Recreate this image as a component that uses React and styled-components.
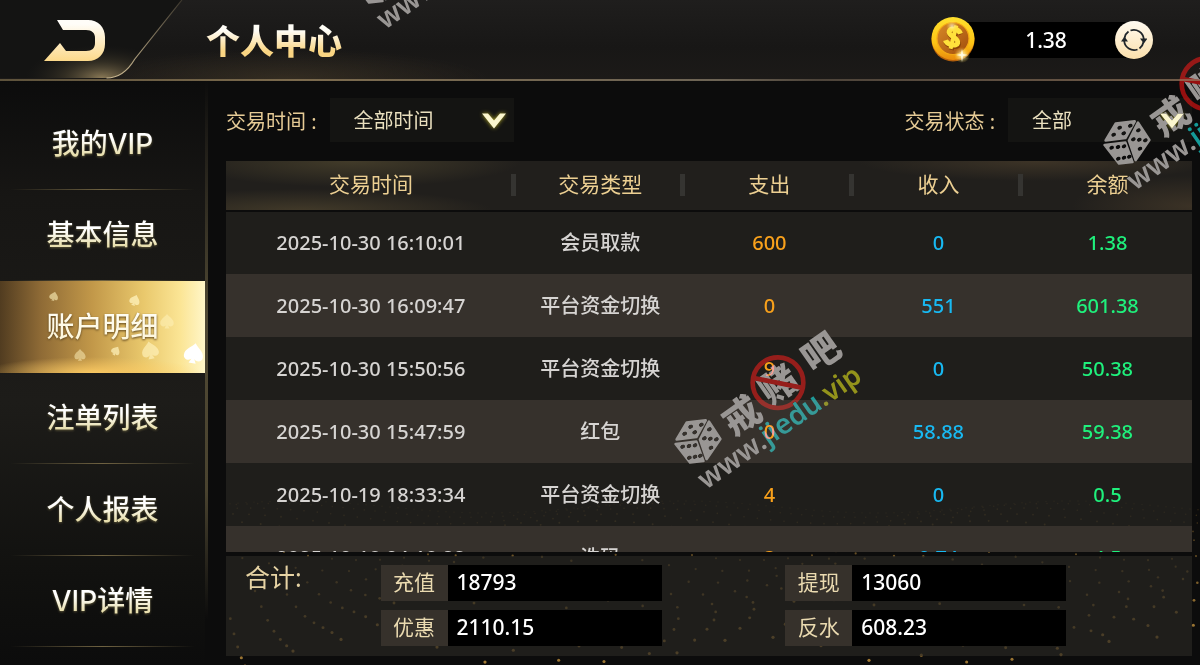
import React, { useState } from "react";
import styled, { createGlobalStyle } from "styled-components";

const tabs = ["我的VIP", "基本信息", "账户明细", "注单列表", "个人报表", "VIP详情"];

const columns = ["交易时间", "交易类型", "支出", "收入", "余额"];

const records = [
  ["2025-10-30 16:10:01", "会员取款", "600", "0", "1.38"],
  ["2025-10-30 16:09:47", "平台资金切换", "0", "551", "601.38"],
  ["2025-10-30 15:50:56", "平台资金切换", "9", "0", "50.38"],
  ["2025-10-30 15:47:59", "红包", "0", "58.88", "59.38"],
  ["2025-10-19 18:33:34", "平台资金切换", "4", "0", "0.5"],
  ["2025-10-18 04:18:22", "洗码", "3", "0.74", "4.5"],
];

const totals = [
  ["充值", "18793"],
  ["提现", "13060"],
  ["优惠", "2110.15"],
  ["反水", "608.23"],
];

const stamps = [
  { x: 319, y: -150 },
  { x: 640, y: 310 },
  { x: 1069, y: 11 },
];

// rows of dots that spread out towards the bottom, like a floor in perspective
const dots = [];
for (let row = 0; row < 16; row++) {
  const depth = row / 15;
  const gap = 8 + depth * 40;
  for (let x = 230 + ((row * 17) % gap); x < 1200; x += gap) {
    const wave = Math.sin(x / 62 + row / 3) * (6 + depth * 14);
    dots.push({
      x,
      y: 22 + depth ** 1.4 * 150 + wave,
      r: 0.7 + depth * 0.9,
      o: 0.2 + depth * 0.6,
    });
  }
}

const BackIcon = () => (
  <svg width="62" height="42" viewBox="0 0 62 42" aria-hidden="true">
    <defs>
      <linearGradient id="back" x1="0" y1="0" x2="0" y2="1">
        <stop offset="0.1" stopColor="#fffdf8" />
        <stop offset="1" stopColor="#fcd98a" />
      </linearGradient>
    </defs>
    <path
      fill="url(#back)"
      d="M13 0H44C54 0 61 7 61 17V24C61 34 54 41 44 41H0L16 23L22 31H42C48 31 51 28 51 23V18C51 13 48 10 42 10H19Z"
    />
  </svg>
);

const BackPlate = () => (
  <Plate viewBox="0 0 205 80" preserveAspectRatio="none" aria-hidden="true">
    <defs>
      <radialGradient id="plateGlow" cx="0.56" cy="1" r="0.42">
        <stop offset="0" stopColor="#a08c63" stopOpacity="0.85" />
        <stop offset="0.5" stopColor="#5c5139" stopOpacity="0.4" />
        <stop offset="1" stopColor="#2a2620" stopOpacity="0" />
      </radialGradient>
      <linearGradient id="plateEdge" x1="0" y1="0" x2="0" y2="1">
        <stop offset="0" stopColor="#3c372d" />
        <stop offset="1" stopColor="#cbb992" />
      </linearGradient>
    </defs>
    <path fill="#141413" d="M0 0H181L134 60Q123 79 106 79H0Z" />
    <path fill="url(#plateGlow)" d="M0 0H181L134 60Q123 79 106 79H0Z" />
    <path fill="none" stroke="url(#plateEdge)" strokeWidth="1.2" d="M181 0L134 60Q123 79 106 79" />
  </Plate>
);

const Coin = () => (
  <CoinSvg width="46" height="48" viewBox="0 0 46 48" aria-hidden="true">
    <defs>
      <linearGradient id="rim" x1="0" y1="0" x2="0" y2="1">
        <stop offset="0" stopColor="#ffe02e" />
        <stop offset="0.6" stopColor="#fdc415" />
        <stop offset="1" stopColor="#e98a0c" />
      </linearGradient>
      <linearGradient id="face" x1="0" y1="0" x2="1" y2="1">
        <stop offset="0" stopColor="#d98a28" />
        <stop offset="1" stopColor="#a04c0b" />
      </linearGradient>
      <radialGradient id="spark">
        <stop offset="0" stopColor="#fff" />
        <stop offset="0.35" stopColor="#fff3ae" stopOpacity="0.8" />
        <stop offset="1" stopColor="#ffd23c" stopOpacity="0" />
      </radialGradient>
    </defs>
    <circle cx="22" cy="24" r="21.5" fill="#b5600b" />
    <circle cx="22" cy="22.5" r="21.5" fill="url(#rim)" />
    <circle cx="22" cy="22.5" r="16" fill="url(#face)" stroke="#f5a915" strokeWidth="1.2" />
    <g transform="rotate(14 22 21)" fill="none">
      <path stroke="#8a4308" strokeWidth="5" d="M29 16.500C26 13 18 13 17.500 17.500C17 22 29 21.500 29 26.500C29 31 19 31 16.500 27.500M23.500 11V34" />
      <path stroke="#ffe13c" strokeWidth="5" d="M28.500 16C26 12 17.500 12 17 16.500C16.500 21 28 20.500 28 25.500C28 30 18 30 15.500 26" />
      <path stroke="#ffe13c" strokeWidth="4" d="M22.500 9V33" />
    </g>
    <circle cx="21" cy="10" r="6" fill="url(#spark)" opacity="0.6" />
    <circle cx="31" cy="39" r="8" fill="url(#spark)" opacity="0.8" />
    <path fill="#fffbe0" d="M31 33L32 38L37 39L32 40L31 46L30 40L25 39L30 38Z" />
  </CoinSvg>
);

const RefreshIcon = () => (
  <svg width="26" height="24" viewBox="0 0 26 24" aria-hidden="true">
    <g fill="none" stroke="#20262a" strokeWidth="1.8">
      <path d="M3.500 10A10 10 0 0 1 7.500 3.600" />
      <path d="M9.500 2.500A10 10 0 0 1 22.800 11" />
      <path d="M22.500 14A10 10 0 0 1 18.500 20.400" />
      <path d="M16.500 21.500A10 10 0 0 1 3.200 13" />
    </g>
    <path fill="#20262a" d="M19 10.500H26.500L22.800 15.500ZM0 13.500L3.500 8.500L7 13.500Z" />
  </svg>
);

const Arrow = () => (
  <ArrowSvg width="28" height="20" viewBox="0 0 28 20" aria-hidden="true">
    <path fill="#fbf6cf" d="M2 2.500L8 2.500L14 9.500L20 2.500L26 2.500L14 17.500Z" />
  </ArrowSvg>
);

const spade = "M0 -8C3 -4 8 -2 8 3C8 7 3 8 1 5L3 9H-3L-1 5C-3 8 -8 7 -8 3C-8 -2 -3 -4 0 -8Z";

const Spades = () => (
  <SpadesSvg viewBox="0 0 205 92" preserveAspectRatio="none" aria-hidden="true">
    <g fill="#fff3bd">
      <path d={spade} transform="translate(54 15) rotate(15) scale(.55)" opacity=".6" />
      <path d={spade} transform="translate(135 19) rotate(20) scale(.65)" opacity=".75" />
      <path d={spade} transform="translate(167 40) scale(.85)" opacity=".5" />
      <path d={spade} transform="translate(80 74) scale(.7)" opacity=".5" />
      <path d={spade} transform="translate(116 70) rotate(30) scale(.55)" opacity=".7" />
      <path d={spade} transform="translate(150 69) rotate(-10) scale(1.05)" opacity=".65" />
      <path d={spade} transform="translate(194 72) rotate(10) scale(1.2)" fill="#fff" />
    </g>
  </SpadesSvg>
);

const pips = [
  [152, 350], [184, 344], [134, 371], [164, 367],
  [128, 410], [147, 408], [165, 406], [148, 443], [165, 440], [181, 437],
  [208, 358], [193, 385], [211, 386], [229, 388], [213, 413],
];

const Stamp = ({ x, y }) => (
  <StampSvg width="260" height="200" viewBox="0 0 780 600" style={{ left: x, top: y }} aria-hidden="true">
    <g fill="#999694" stroke="#999694" strokeWidth="8" strokeLinejoin="round">
      <path d="M140 338L197 331L169 381L110 388Z" />
      <path d="M107 402L169 395L190 453L150 457Z" />
      <path d="M207 335L241 387L200 447L180 389Z" />
    </g>
    {pips.map(([px, py]) => (
      <ellipse key={px + "-" + py} cx={px} cy={py} rx="7" ry="5.5" transform={`rotate(-25 ${px} ${py})`} />
    ))}
    <g fill="#999694" fontSize="112" fontWeight="900" textAnchor="middle">
      <text transform="translate(328 350) rotate(-35)">戒</text>
      <text transform="translate(438 256) rotate(-35)">赌</text>
      <text transform="translate(566 160) rotate(-35)">吧</text>
    </g>
    <circle cx="414" cy="218" r="76" fill="none" stroke="#960f0f" strokeWidth="14" />
    <path d="M342 204L486 233" stroke="#960f0f" strokeWidth="14" />
    <text transform="translate(198 540) rotate(-35)" fontSize="84" fontWeight="600" fill="#999694">
      www.<tspan fill="#149a98">jiedu</tspan><tspan fill="#939312">.vip</tspan>
    </text>
  </StampSvg>
);

const App = () => {
  const [active, setActive] = useState(2);

  return (
    <Page>
      <Global />
      <Header>
        <BackButton type="button" aria-label="返回">
          <BackPlate />
          <BackIcon />
        </BackButton>
        <Title>个人中心</Title>
        <Balance>
          <Coin />
          <Amount>1.38</Amount>
          <Refresh type="button" aria-label="刷新">
            <RefreshIcon />
          </Refresh>
        </Balance>
      </Header>

      <Body>
        <Floor viewBox="0 0 1200 180" preserveAspectRatio="none" aria-hidden="true">
          {dots.map((d, i) => (
            <circle key={i} cx={d.x} cy={d.y} r={d.r} fill="#c8963f" opacity={d.o} />
          ))}
        </Floor>
        <Sidebar>
          {tabs.map((tab, i) => (
            <Tab key={tab} type="button" $active={i === active} onClick={() => setActive(i)}>
              {i === active && <Spades />}
              <TabText $active={i === active}>{tab}</TabText>
            </Tab>
          ))}
        </Sidebar>

        <Main>
          <Filters>
            <Filter>
              <label htmlFor="time">交易时间 :</label>
              <SelectBox>
                <Select id="time">
                  <option>全部时间</option>
                </Select>
                <Arrow />
              </SelectBox>
            </Filter>
            <Filter>
              <label htmlFor="status">交易状态 :</label>
              <SelectBox>
                <Select id="status">
                  <option>全部</option>
                </Select>
                <Arrow />
              </SelectBox>
            </Filter>
          </Filters>

          <Scroll>
            <Table>
              <thead>
                <tr>
                  {columns.map((c) => (
                    <Head key={c}>{c}</Head>
                  ))}
                </tr>
              </thead>
              <tbody>
                {records.map(([time, type, out, income, rest]) => (
                  <Row key={time}>
                    <Cell>{time}</Cell>
                    <Cell>{type}</Cell>
                    <Cell $color="#f9a11b">{out}</Cell>
                    <Cell $color="#18b9f2">{income}</Cell>
                    <Cell $color="#1ff07c">{rest}</Cell>
                  </Row>
                ))}
              </tbody>
            </Table>
          </Scroll>

          <Summary>
            <SummaryTitle>合计:</SummaryTitle>
            <Totals>
              {totals.map(([name, value]) => (
                <Total key={name}>
                  <dt>{name}</dt>
                  <dd>{value}</dd>
                </Total>
              ))}
            </Totals>
          </Summary>
        </Main>
      </Body>

      {stamps.map((s) => (
        <Stamp key={s.x} x={s.x} y={s.y} />
      ))}
    </Page>
  );
};

const Global = createGlobalStyle`
  * {
    box-sizing: border-box;
  }
  body {
    margin: 0;
    background: #0c0c0c;
    font-family: "Noto Sans", "Noto Sans CJK SC", sans-serif;
  }
  button, select {
    font-family: inherit;
    border: 0;
    padding: 0;
    cursor: pointer;
  }
`;

const Page = styled.div`
  position: relative;
  display: flex;
  flex-direction: column;
  height: 100vh;
  overflow: hidden;
  background: #0c0c0c;
`;

const Header = styled.header`
  display: flex;
  align-items: center;
  height: 81px;
  padding-right: 47px;
  border-bottom: 2px solid;
  border-image: linear-gradient(90deg, #5d523b, #7c6b4e 25%, #6d6455 60%, #4d443a 68%, #715b48) 1;
  background: radial-gradient(200px 30px at 24% 100%, rgba(74, 62, 42, 0.5), transparent),
    linear-gradient(#1f1e1d, #181716 60%, #1c1a18);
`;

const BackButton = styled.button`
  position: relative;
  display: flex;
  width: 206px;
  height: 79px;
  padding: 20px 0 0 44px;
  background: none;
  & svg:last-child {
    position: relative;
  }
`;

const Plate = styled.svg`
  position: absolute;
  inset: 0;
  width: 100%;
  height: 100%;
`;

const Title = styled.h1`
  flex: 1;
  margin: 0;
  padding-top: 2px;
  font-size: 34px;
  line-height: 44px;
  font-weight: 800;
  color: transparent;
  background: linear-gradient(#fffdf6 30%, #fad582 75%);
  background-clip: text;
`;

const Balance = styled.div`
  display: flex;
  align-items: center;
`;

const CoinSvg = styled.svg`
  position: relative;
`;

const Amount = styled.div`
  width: 162px;
  height: 36px;
  margin: 0 -12px;
  background: #000;
  color: #fff;
  font-size: 21px;
  line-height: 36px;
  font-weight: 500;
  text-align: center;
`;

const Refresh = styled.button`
  position: relative;
  display: flex;
  align-items: center;
  justify-content: center;
  width: 38px;
  height: 38px;
  border-radius: 50%;
  background: linear-gradient(#fffaf0, #fbe0ac);
`;

const Body = styled.div`
  position: relative;
  display: flex;
  flex: 1;
  min-height: 0;
`;

const Floor = styled.svg`
  position: absolute;
  left: 0;
  bottom: 0;
  width: 100%;
  height: 180px;
`;

const Sidebar = styled.nav`
  position: relative;
  display: flex;
  flex-direction: column;
  width: 208px;
  padding: 17px 0 18px;
  border-right: 3px solid;
  border-image: linear-gradient(#0c0c0c, #1b1915 8%, #4f4833 40%, #4a432f 70%, #0c0c0c 92%) 1;
  background: linear-gradient(#0c0c0c, #171614 20%, #1d1c19 55%, #11110f 85%, #0c0c0c);
`;

const Tab = styled.button`
  position: relative;
  flex: 1;
  background: ${(p) =>
    p.$active
      ? `radial-gradient(110px 16px at 45% 100%, rgba(255, 205, 100, 0.9), transparent),
         linear-gradient(90deg, #513c20, #8f6b36 20%, #c29849 45%, #e9c86c 70%, #fbe595 88%, #fff6c8)`
      : `linear-gradient(90deg, transparent 5%, #6f6241 50%, transparent 95%) bottom / 100% 1px no-repeat`};
`;

const TabText = styled.span`
  position: relative;
  font-family: Inter, "Noto Sans CJK SC", sans-serif;
  font-size: 28px;
  line-height: 36px;
  font-weight: 500;
  color: transparent;
  background: ${(p) =>
    p.$active ? "linear-gradient(#fffef6, #fdf5d6)" : "linear-gradient(#fff 35%, #e8dfae 80%)"};
  background-clip: text;
  filter: drop-shadow(0 1px 1px ${(p) => (p.$active ? "#5c431c" : "#5a5336")});
`;

const SpadesSvg = styled.svg`
  position: absolute;
  inset: 0;
  width: 100%;
  height: 100%;
`;

const Main = styled.main`
  position: relative;
  display: flex;
  flex: 1;
  flex-direction: column;
  min-width: 0;
  padding: 17px 8px 9px 18px;
`;

const Filters = styled.div`
  display: flex;
  justify-content: space-between;
  margin-bottom: 19px;
`;

const Filter = styled.div`
  display: flex;
  align-items: center;
  gap: 13px;
  color: #e6cb96;
  font-size: 20px;
`;

const SelectBox = styled.div`
  position: relative;
`;

const Select = styled.select`
  width: 184px;
  height: 44px;
  padding-left: 24px;
  appearance: none;
  background: #141412;
  color: #e9dfbe;
  font-size: 20px;
`;

const ArrowSvg = styled.svg`
  position: absolute;
  right: 6px;
  top: 13px;
  pointer-events: none;
  filter: drop-shadow(0 0 2px #b9b02c);
`;

const Scroll = styled.div`
  flex: 1;
  min-height: 0;
  margin-bottom: 4px;
  overflow: hidden;
`;

const Table = styled.table`
  width: 100%;
  table-layout: fixed;
  border-collapse: collapse;
  text-align: center;
  & thead {
    background: radial-gradient(170px 26px at 13% 0, rgba(88, 78, 50, 0.6), transparent),
      radial-gradient(190px 22px at 8% 100%, rgba(88, 76, 50, 0.6), transparent),
      radial-gradient(180px 20px at 84% 0, rgba(80, 66, 46, 0.6), transparent),
      radial-gradient(120px 30px at 100% 90%, rgba(70, 58, 42, 0.7), transparent), #211f1c;
  }
`;

const Head = styled.th`
  width: 17.5%;
  height: 50px;
  padding: 0 0 4px;
  border-bottom: 2px solid #0c0c0c;
  color: #eccf92;
  font-size: 21px;
  line-height: 30px;
  font-weight: 400;
  background: linear-gradient(#353431, #353431) right 13px / 5px 22px no-repeat;
  &:first-child {
    width: 30%;
  }
  &:last-child {
    background: none;
  }
`;

const Row = styled.tr`
  height: 63px;
  background: rgba(40, 39, 34, 0.7);
  &:nth-child(even) {
    background: #36312c;
  }
`;

const Cell = styled.td`
  padding: 0;
  color: ${(p) => p.$color || "#d6d4d2"};
  font-size: 20px;
  line-height: 30px;
  font-weight: 500;
`;

const Summary = styled.section`
  display: flex;
  height: 100px;
  padding-top: 9px;
  background: rgba(40, 39, 34, 0.7);
`;

const SummaryTitle = styled.h2`
  width: 16%;
  margin: 0;
  padding-left: 19px;
  color: #e6d3a4;
  font-size: 25px;
  line-height: 24px;
  font-weight: 400;
`;

const Totals = styled.dl`
  display: grid;
  flex: 1;
  grid-template-columns: 1fr 1fr;
  align-content: start;
  column-gap: 18%;
  row-gap: 9px;
  margin: 0 13% 0 0;
`;

const Total = styled.div`
  display: flex;
  height: 36px;
  font-size: 21px;
  line-height: 34px;
  & dt {
    width: 67px;
    background: #36312b;
    color: #eadab0;
    text-align: center;
  }
  & dd {
    flex: 1;
    margin: 0;
    padding-left: 9px;
    background: #000;
    color: #fff;
    font-weight: 500;
  }
`;

const StampSvg = styled.svg`
  position: absolute;
  pointer-events: none;
  mix-blend-mode: lighten;
`;

export default App;
